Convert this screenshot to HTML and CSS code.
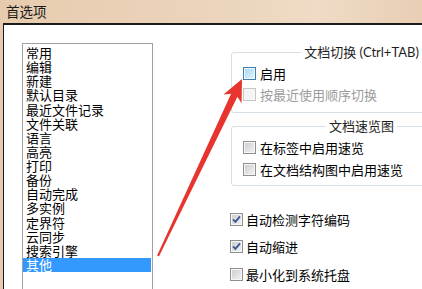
FILE: index.html
```html
<!DOCTYPE html>
<html lang="zh-CN">
<head>
<meta charset="utf-8">
<title>首选项</title>
<link rel="stylesheet" href="styles.css">
</head>
<body>
<div class="window">
  <div class="titlebar">首选项</div>
  <div class="client">
    <ul class="list">
      <li>常用</li>
      <li>编辑</li>
      <li>新建</li>
      <li>默认目录</li>
      <li>最近文件记录</li>
      <li>文件关联</li>
      <li>语言</li>
      <li>高亮</li>
      <li>打印</li>
      <li>备份</li>
      <li>自动完成</li>
      <li>多实例</li>
      <li>定界符</li>
      <li>云同步</li>
      <li>搜索引擎</li>
      <li class="selected">其他</li>
    </ul>
    <div class="options">
      <fieldset class="group group-switch">
        <legend>文档切换 (Ctrl+TAB)</legend>
        <label class="check hover"><span class="box"></span>启用</label>
        <label class="check disabled"><span class="box"></span>按最近使用顺序切换</label>
      </fieldset>
      <fieldset class="group group-preview">
        <legend>文档速览图</legend>
        <label class="check"><span class="box"></span>在标签中启用速览</label>
        <label class="check"><span class="box"></span>在文档结构图中启用速览</label>
      </fieldset>
      <div class="plain">
        <label class="check checked"><span class="box"><svg viewBox="0 0 11 11" width="11" height="11"><path d="M2 5.3 L4.4 7.8 L9 2.4" fill="none" stroke="#3a5796" stroke-width="1.8"/></svg></span>自动检测字符编码</label>
        <label class="check checked"><span class="box"><svg viewBox="0 0 11 11" width="11" height="11"><path d="M2 5.3 L4.4 7.8 L9 2.4" fill="none" stroke="#3a5796" stroke-width="1.8"/></svg></span>自动缩进</label>
        <label class="check"><span class="box"></span>最小化到系统托盘</label>
      </div>
    </div>
  </div>
  <svg class="arrow" viewBox="0 0 422 289" width="422" height="289">
    <polygon points="242,79 241.6,103.2 237.4,96.8 158.9,256.4 157.1,255.6 231.1,93.8 223.5,94.6" fill="#e8342f"/>
  </svg>
</div>
</body>
</html>
```
FILE: styles.css
```css
html, body {
  margin: 0;
  height: 100%;
  overflow: hidden;
}
body {
  background: #e6cbb0;
  font-family: "Noto Sans CJK SC", "Noto Sans", sans-serif;
  color: #000;
}
.window {
  position: relative;
  width: 422px;
  height: 289px;
  overflow: hidden;
}
.titlebar {
  height: 23px;
  padding-left: 6px;
  font-size: 13.5px;
  line-height: 23px;
  color: #1a1a1a;
  background: linear-gradient(to right, #e7cbae 0%, #ecd5bd 55%, #efdbc6 75%, #e8ceb3 100%);
}
.client {
  margin-left: 3px;
  border-top: 2px solid #1a1a1a;
  border-left: 1px solid #1a1a1a;
  background: #fff;
  height: 264px;
  display: flex;
  padding: 18px 0 0 18px;
  overflow: hidden;
}
.list {
  flex: none;
  width: 129px;
  height: 260px;
  margin: 0;
  padding: 2px 0 0 0;
  list-style: none;
  border: 1px solid #a0a0a0;
  font-size: 13px;
  line-height: 14.13px;
}
.list li {
  padding-left: 3px;
  white-space: nowrap;
}
.list li.selected {
  background: #3399ff;
  color: #fff;
  margin-right: 1px;
}
.options {
  flex: none;
  width: 260px;
  margin-left: 78px;
  margin-top: 2px;
}
.group {
  box-sizing: border-box;
  width: 250px;
  margin: 0;
  border: 1px solid #d5dfe5;
  border-radius: 3px;
  padding: 3px 0 7px 11px;
}
.group legend {
  margin: 0 auto;
  padding: 0 3px;
  font-family: Lato, "Noto Sans CJK SC", sans-serif;
  font-size: 13px;
  line-height: 15px;
  color: #1e1e1e;
  white-space: nowrap;
}
.group-preview {
  margin-top: 6px;
  padding: 2px 0 5px 11px;
}
.check {
  display: flex;
  align-items: center;
  height: 21px;
  font-size: 13px;
  line-height: 15px;
  white-space: nowrap;
}
.group-preview .check {
  height: 22px;
}
.box {
  flex: none;
  box-sizing: border-box;
  width: 13px;
  height: 13px;
  margin-right: 4px;
  border: 1px solid #8e8f8f;
  background: linear-gradient(135deg, #c9ccd1, #f3f3f3);
  box-shadow: inset 0 0 0 1px #f7f7f7;
  display: flex;
  align-items: center;
  justify-content: center;
}
.box svg {
  display: block;
}
.check.hover .box {
  border-color: #3c7fb1;
  background: linear-gradient(135deg, #a6d6f7, #e6f5fe);
}
.check.disabled {
  color: #9c9c9c;
}
.check.disabled .box {
  border-color: #c6c6c6;
  background: #f4f4f4;
}
.plain {
  margin-top: 23px;
  margin-left: -1px;
  display: flex;
  flex-direction: column;
  gap: 7.5px;
}
.plain .check {
  height: 20px;
}
.plain .box {
  margin-right: 3px;
}
.arrow {
  position: absolute;
  left: 0;
  top: 0;
  pointer-events: none;
}
```
